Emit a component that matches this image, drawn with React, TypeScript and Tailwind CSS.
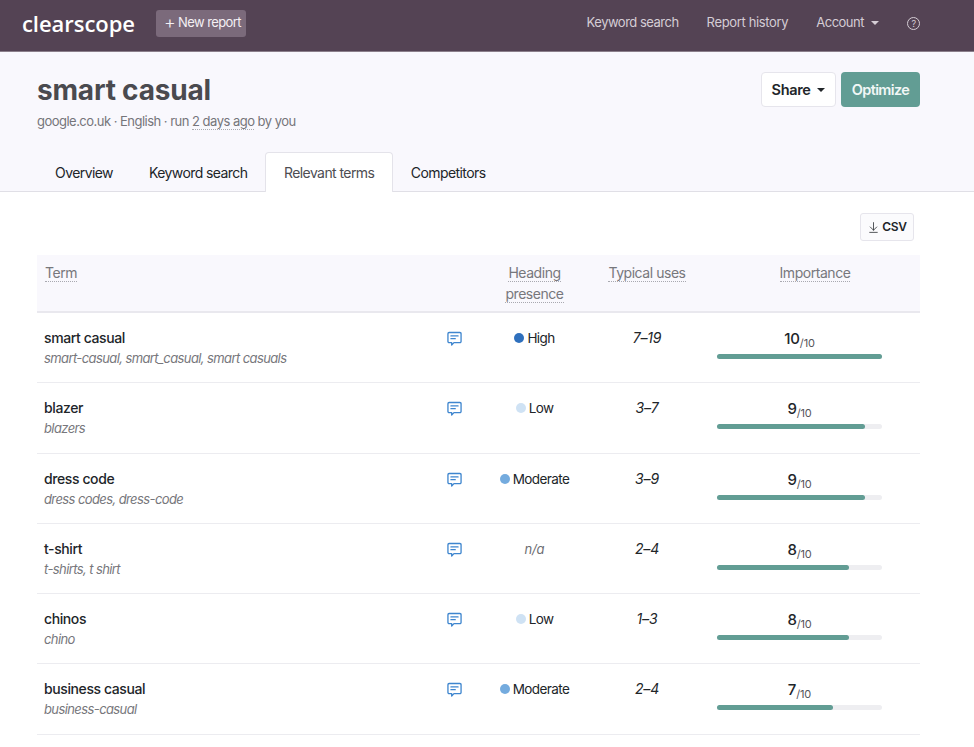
import { ArrowDownToLine } from "lucide-react";

const rows = [
  { term: "smart casual", variants: "smart-casual, smart_casual, smart casuals", heading: "High", uses: "7–19", score: 10 },
  { term: "blazer", variants: "blazers", heading: "Low", uses: "3–7", score: 9 },
  { term: "dress code", variants: "dress codes, dress-code", heading: "Moderate", uses: "3–9", score: 9 },
  { term: "t-shirt", variants: "t-shirts, t shirt", heading: "n/a", uses: "2–4", score: 8 },
  { term: "chinos", variants: "chino", heading: "Low", uses: "1–3", score: 8 },
  { term: "business casual", variants: "business-casual", heading: "Moderate", uses: "2–4", score: 7 },
];

const dotColor: Record<string, string> = {
  High: "bg-[#2f70bd]",
  Moderate: "bg-[#74abde]",
  Low: "bg-[#cfe2f4]",
};

function Caret({ className }: { className: string }) {
  return <span className={`inline-block border-x-[4px] border-t-[4px] border-x-transparent ${className}`} />;
}

function CommentIcon() {
  return (
    <svg width="15" height="15" viewBox="0 0 16 16" fill="none" stroke="#3f86cf" strokeWidth="1.4" strokeLinejoin="round" strokeLinecap="round">
      <path d="M2.2 1.6h11.6a1.2 1.2 0 0 1 1.2 1.2v8.4a1.2 1.2 0 0 1-1.2 1.2H7.4L5 14.9v-2.5H2.2A1.2 1.2 0 0 1 1 11.2V2.8a1.2 1.2 0 0 1 1.2-1.2z" />
      <path d="M4.2 5.2h7.6M4.2 8.2h4.6" />
    </svg>
  );
}

function Heading({ value }: { value: string }) {
  if (value === "n/a") return <span className="text-[13px] italic text-[#6d6d72]">n/a</span>;
  return (
    <span className="inline-flex items-center gap-[3px] text-[13.5px] tracking-[-0.6px]">
      <span className={`size-[10px] rounded-full ${dotColor[value]}`} />
      {value}
    </span>
  );
}

export default function App() {
  return (
    <div className="h-[747px] overflow-hidden bg-white font-['Inter',sans-serif] text-[14px] text-[#212529]">
      {/* top nav */}
      <div className="flex h-[52px] items-center justify-between border-b border-[#8b7f8b] bg-[#544354] pb-[5px] pl-[22px] pr-[54px]">
        <div className="flex items-center gap-[21px]">
          <span className="font-['Open_Sans',sans-serif] text-[22px] leading-none font-semibold tracking-[-0.05px] text-white">clearscope</span>
          <button className="flex h-[27px] w-[90px] items-center gap-[3px] rounded-[3px] bg-[#7b6a7b] pl-[8px] text-[13px] tracking-[-0.6px] text-[#f4f0f4]">
            <span className="text-[18px] leading-none font-light">+</span>New report
          </button>
        </div>
        <div className="flex items-center text-[13px] tracking-[-0.5px] text-[#d5cdd5]">
          <span>Keyword search</span>
          <span className="ml-[28px] tracking-[-0.35px]">Report history</span>
          <span className="ml-[28px] flex items-center gap-[7px]">Account <Caret className="border-t-[#d5cdd5]" /></span>
          <span className="ml-[28px] flex size-[13px] items-center justify-center rounded-full border border-[#d5cdd5] text-[9px] leading-none">?</span>
        </div>
      </div>

      {/* report header */}
      <div className="h-[140px] border-b border-[#e0dfe6] bg-[#f9f8fd]">
        <div className="flex justify-between pl-[37px] pr-[54px] pt-[20px]">
          <div>
            <h1 className="text-[28px] leading-[36px] font-bold tracking-[-0.2px] text-[#4a4a4f]">smart casual</h1>
            <p className="mt-[4px] text-[13px] tracking-[-0.52px] text-[#75757a]">
              google.co.uk · English · run <span className="border-b border-dotted border-[#a9a9b0]">2 days ago</span> by you
            </p>
          </div>
          <div className="flex gap-[5px]">
            <button className="flex h-[35px] w-[75px] items-center justify-center gap-[7px] rounded-[4px] border border-[#e6e5ec] bg-white text-[14.5px] font-semibold tracking-[-0.35px]">
              Share <Caret className="border-t-[#212529]" />
            </button>
            <button className="h-[35px] w-[79px] rounded-[4px] bg-[#629d94] text-[14.5px] font-semibold tracking-[-0.65px] text-[#f1f7f6]">Optimize</button>
          </div>
        </div>
        <div className="mt-[20px] flex pl-[37px] text-[14px] tracking-[-0.58px]">
          <span className="px-[18px] pt-[10px]">Overview</span>
          <span className="px-[18px] pt-[10px]">Keyword search</span>
          <span className="relative h-[40px] rounded-t-[4px] border border-b-0 border-[#e4e3ea] bg-white px-[17.5px] pt-[9px] text-[#4d4d52]">Relevant terms</span>
          <span className="px-[18px] pt-[10px]">Competitors</span>
        </div>
      </div>

      {/* table */}
      <div className="px-[37px] pr-[54px]">
        <div className="flex justify-end pt-[21px] pr-[6px]">
          <button className="flex h-[28px] w-[54px] items-center justify-center gap-[2px] rounded-[3px] border border-[#e6e5ec] bg-[#fbfbfd] text-[12px] font-semibold tracking-[-0.3px]">
            <ArrowDownToLine size={13} strokeWidth={1.4} />CSV
          </button>
        </div>
        <div className="mt-[14px] grid h-[58px] grid-cols-[400px_35px_125px_100px_1fr] border-b-2 border-[#e9e8ee] bg-[#f9f8fd] pt-[7px] text-[14px] leading-[21px] tracking-[-0.45px] text-[#77777c]">
          <div className="pl-[8px]"><span className="border-b border-dotted border-[#a9a9b0]">Term</span></div>
          <div />
          <div className="text-center"><span className="border-b border-dotted border-[#a9a9b0]">Heading</span><br /><span className="border-b border-dotted border-[#a9a9b0]">presence</span></div>
          <div className="text-center"><span className="border-b border-dotted border-[#a9a9b0]">Typical uses</span></div>
          <div className="pl-[13px] text-center"><span className="border-b border-dotted border-[#a9a9b0]">Importance</span></div>
        </div>
        {rows.map((row) => (
          <div key={row.term} className="grid h-[70.3px] grid-cols-[400px_35px_125px_100px_1fr] border-b border-[#ececf0] pt-[15px] tracking-[-0.15px]">
            <div className="pl-[7px]">
              <div className="leading-[20px] font-medium tracking-[-0.4px]">{row.term}</div>
              <div className="text-[13px] leading-[21px] tracking-[-0.6px] text-[#77777c] italic">{row.variants}</div>
            </div>
            <div className="flex justify-center pt-[3px]"><CommentIcon /></div>
            <div className="text-center leading-[20px]"><Heading value={row.heading} /></div>
            <div className="text-center leading-[20px] italic">{row.uses}</div>
            <div className="ml-[20px] w-[165px] pt-[1px]">
              <div className="text-center text-[15px] leading-[20px] font-medium">
                {row.score}<span className="align-[-3px] text-[11px] leading-none font-normal text-[#55555a]">/10</span>
              </div>
              <div className="mt-[5px] h-[5px] rounded-full bg-[#eeeef1]">
                <div className="h-full rounded-full bg-[#629d94]" style={{ width: `${row.score === 10 ? 100 : row.score === 9 ? 89.5 : row.score === 8 ? 80 : 70}%` }} />
              </div>
            </div>
          </div>
        ))}
      </div>
    </div>
  );
}
